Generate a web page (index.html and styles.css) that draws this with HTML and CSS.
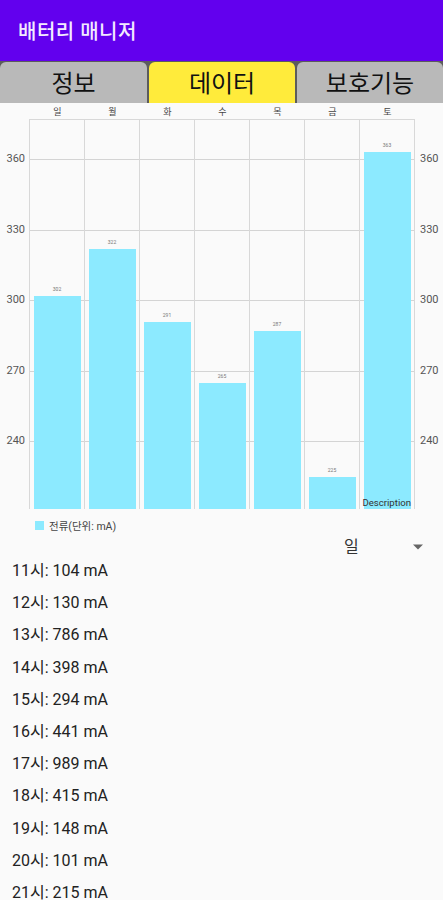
FILE: index.html
```
<!DOCTYPE html>
<html lang="ko">
<head>
    <meta charset="UTF-8">
    <title>배터리 매니저</title>
    <link rel="stylesheet" href="styles.css">
</head>
<body>
    <header class="app-bar">
        <h1>배터리 매니저</h1>
    </header>
    <nav class="tabs">
        <div class="tab">정보</div>
        <div class="tab active">데이터</div>
        <div class="tab">보호기능</div>
    </nav>

    <div class="chart">
        <div class="days">
            <span>일</span>
            <span>월</span>
            <span>화</span>
            <span>수</span>
            <span>목</span>
            <span>금</span>
            <span>토</span>
        </div>
        <div class="axis axis-left">
            <span>360</span>
            <span>330</span>
            <span>300</span>
            <span>270</span>
            <span>240</span>
        </div>
        <div class="plot">
            <div class="col"><span class="value">302</span><div class="bar" style="height: 213px"></div></div>
            <div class="col"><span class="value">322</span><div class="bar" style="height: 260px"></div></div>
            <div class="col"><span class="value">291</span><div class="bar" style="height: 187px"></div></div>
            <div class="col"><span class="value">265</span><div class="bar" style="height: 126px"></div></div>
            <div class="col"><span class="value">287</span><div class="bar" style="height: 178px"></div></div>
            <div class="col"><span class="value">225</span><div class="bar" style="height: 32px"></div></div>
            <div class="col"><span class="value">363</span><div class="bar" style="height: 357px"></div></div>
            <span class="description">Description</span>
        </div>
        <div class="axis axis-right">
            <span>360</span>
            <span>330</span>
            <span>300</span>
            <span>270</span>
            <span>240</span>
        </div>
    </div>
    <div class="legend"><span class="legend-box"></span>전류(단위: mA)</div>

    <div class="spinner">
        <span>일</span>
        <svg width="10" height="6" viewBox="0 0 10 6"><path d="M0 0.5h10L5 5.5z" fill="#666"/></svg>
    </div>

    <ul class="hours">
        <li>11시: 104 mA</li>
        <li>12시: 130 mA</li>
        <li>13시: 786 mA</li>
        <li>14시: 398 mA</li>
        <li>15시: 294 mA</li>
        <li>16시: 441 mA</li>
        <li>17시: 989 mA</li>
        <li>18시: 415 mA</li>
        <li>19시: 148 mA</li>
        <li>20시: 101 mA</li>
        <li>21시: 215 mA</li>
    </ul>
</body>
</html>
```
FILE: styles.css
```
* { box-sizing: border-box; }
body { font-family: Roboto, 'Noto Sans CJK KR', sans-serif; background: #fafafa; color: #222; margin: 0; height: 900px; overflow: hidden; }

.app-bar { height: 61px; background: #6200ee; padding: 2px 0 0 18px; display: flex; align-items: center; }
.app-bar h1 { margin: 0; color: #f3eaff; font-size: 20px; font-weight: 500; line-height: 28px; letter-spacing: 0.5px; }

.tabs { display: grid; grid-template-columns: 147px 146px 146px; gap: 2px; height: 42px; padding-top: 1px; background: #5c5c5c; }
.tab { background: #b9b9b9; color: #111; font-size: 24px; line-height: 41px; padding-top: 2px; height: 41px; text-align: center; border-radius: 6px 6px 0 0; }
.tab.active { background: #ffeb3b; }

/* 차트 */
.chart { display: grid; grid-template-columns: 29px 386px 28px; grid-template-rows: 16px 390px; }
.days { grid-column: 2; display: grid; grid-template-columns: repeat(7, 55px); padding-left: 1px; font-size: 9px; line-height: 18px; text-align: center; color: #444; }
.axis { grid-row: 2; padding-top: 5px; font-size: 11px; color: #555; }
.axis span { display: block; height: 70.5px; line-height: 70.5px; }
.axis-left { grid-column: 1; padding-right: 4px; text-align: right; }
.axis-right { grid-column: 3; padding-left: 5px; }
.plot {
    grid-column: 2;
    position: relative;
    display: grid;
    grid-template-columns: repeat(7, 55px);
    border-top: 1px solid #d8d8d8;
    border-right: 1px solid #d8d8d8;
    background: repeating-linear-gradient(#d4d4d4 0 1px, transparent 1px 70.5px) 0 39px no-repeat;
}
.col { border-left: 1px solid #d8d8d8; display: flex; flex-direction: column; justify-content: flex-end; align-items: center; }
.bar { width: 47px; background: #8ceaff; }
.value { font-size: 5px; line-height: 6px; margin-bottom: 4px; color: #777; }
.description { position: absolute; right: 3px; bottom: 0; font-size: 9.6px; line-height: 12px; color: #333; }

.legend { display: flex; align-items: center; height: 32px; padding-left: 35px; font-size: 10.5px; color: #444; }
.legend-box { width: 9px; height: 9px; margin-right: 5px; background: #8ceaff; }

.spinner { display: flex; justify-content: space-between; align-items: center; height: 12px; padding: 0 20px 0 344px; font-size: 16px; line-height: 12px; color: #333; }

.hours { list-style: none; margin: 0; padding: 2px 0 0 12px; }
.hours li { height: 32.2px; line-height: 32.2px; font-size: 16px; }
```
